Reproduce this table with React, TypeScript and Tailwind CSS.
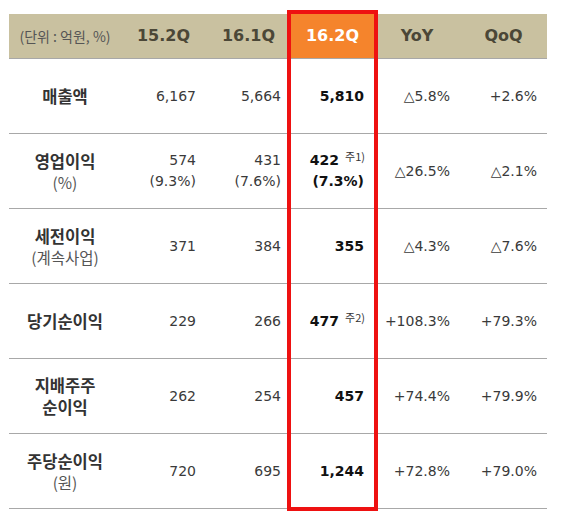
import React from 'react'

type Row = {
  label: string
  sub?: string
  labelLines?: string[]
  q1: string[]
  q2: string[]
  q3: string[]
  note?: string
  yoy: string
  qoq: string
}

const rows: Row[] = [
  { label: '매출액', q1: ['6,167'], q2: ['5,664'], q3: ['5,810'], yoy: '△5.8%', qoq: '+2.6%' },
  {
    label: '영업이익',
    sub: '(%)',
    q1: ['574', '(9.3%)'],
    q2: ['431', '(7.6%)'],
    q3: ['422', '(7.3%)'],
    note: '주1)',
    yoy: '△26.5%',
    qoq: '△2.1%',
  },
  { label: '세전이익', sub: '(계속사업)', q1: ['371'], q2: ['384'], q3: ['355'], yoy: '△4.3%', qoq: '△7.6%' },
  { label: '당기순이익', q1: ['229'], q2: ['266'], q3: ['477'], note: '주2)', yoy: '+108.3%', qoq: '+79.3%' },
  { label: '지배주주', labelLines: ['지배주주', '순이익'], q1: ['262'], q2: ['254'], q3: ['457'], yoy: '+74.4%', qoq: '+79.9%' },
  { label: '주당순이익', sub: '(원)', q1: ['720'], q2: ['695'], q3: ['1,244'], yoy: '+72.8%', qoq: '+79.0%' },
]

const num = "font-['DejaVu_Sans',sans-serif]"
const kr = "font-['Noto_Sans_CJK_KR','Noto_Sans',sans-serif]"
const cols = 'grid grid-cols-[112px_85px_85px_83px_86px_87px]'

const Cell = ({ lines, bold, note }: { lines: string[]; bold?: boolean; note?: string }) => (
  <div
    className={`flex flex-col items-end justify-center pr-[10px] text-[14px] leading-[21px] ${num} ${
      bold ? 'font-bold text-[#111]' : 'text-[#3a3a3a]'
    }`}
  >
    {lines.map((l, i) => (
      <span key={i} className="flex items-start">
        {l}
        {i === 0 && note && (
          <span className={`ml-[6px] -mt-[2px] -mr-[1px] text-[11px] leading-[16px] font-normal text-[#333] ${kr}`}>
            {note}
          </span>
        )}
      </span>
    ))}
  </div>
)

export default function App() {
  return (
    <div className="relative w-[564px] h-[521px] bg-white pl-[9px] pt-[14px]">
      <div className="w-[538px]">
        {/* header */}
        <div className={`${cols} h-[45px] bg-[#c9c1a0] border-b border-[#a8a8a8]`}>
          <div className={`flex items-center justify-center text-[14px] text-[#555] ${kr}`}>(단위 : 억원, %)</div>
          {['15.2Q', '16.1Q'].map((h) => (
            <div key={h} className={`flex items-center justify-center text-[16px] font-bold text-[#4b4737] ${num}`}>
              {h}
            </div>
          ))}
          <div className={`flex items-center justify-center bg-[#f5842c] text-[16px] font-bold text-white ${num}`}>
            16.2Q
          </div>
          <div className={`flex items-center justify-center text-[16px] font-bold text-[#4b4737] ${num}`}>YoY</div>
          <div className={`flex items-center justify-center text-[16px] font-bold text-[#4b4737] ${num}`}>QoQ</div>
        </div>

        {rows.map((r) => (
          <div key={r.label} className={`${cols} h-[75px] border-b border-[#a8a8a8]`}>
            <div className={`flex flex-col items-center justify-center ${kr}`}>
              {(r.labelLines ?? [r.label]).map((l) => (
                <span key={l} className="text-[16.5px] font-bold leading-[22px] text-[#333]">
                  {l}
                </span>
              ))}
              {r.sub && <span className="text-[15.5px] leading-[20px] text-[#555]">{r.sub}</span>}
            </div>
            <Cell lines={r.q1} />
            <Cell lines={r.q2} />
            <Cell lines={r.q3} bold note={r.note} />
            <Cell lines={[r.yoy]} />
            <Cell lines={[r.qoq]} />
          </div>
        ))}
      </div>

      {/* highlight box */}
      <div className="absolute left-[287px] top-[10px] w-[91px] h-[501px] border-4 border-[#ee1111]" />
    </div>
  )
}
